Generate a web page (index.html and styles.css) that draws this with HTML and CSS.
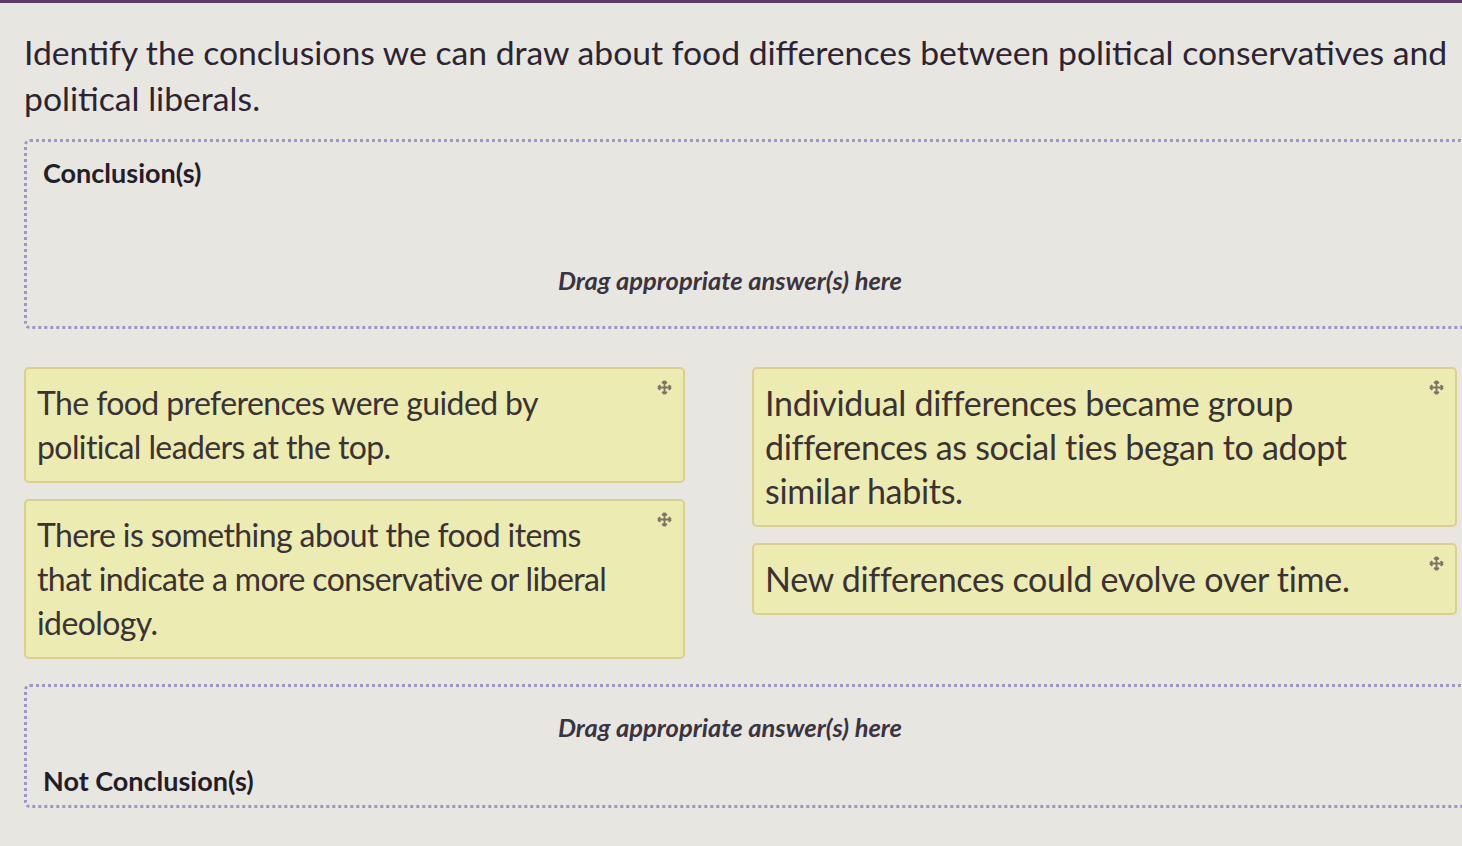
FILE: index.html
```html
<!DOCTYPE html>
<html lang="en">
<head>
    <meta charset="UTF-8">
    <meta name="viewport" content="width=device-width, initial-scale=1.0">
    <title>Conclusions - Drag and Drop</title>
    <link rel="stylesheet" href="styles.css">
</head>
<body>
    <div class="topbar"></div>

    <div class="page">
        <h1 class="question">Identify the conclusions we can draw about food differences between political conservatives and political liberals.</h1>

        <div class="dropzone">
            <div class="zone-label">Conclusion(s)</div>
            <div class="zone-hint">Drag appropriate answer(s) here</div>
        </div>

        <div class="answers">
            <div class="answer-col">
                <div class="card">
                    <p>The food preferences were guided by political leaders at the top.</p>
                    <svg class="move" viewBox="0 0 16 16"><path d="M8 1v14M1 8h14M8 1l-2.5 2.5M8 1l2.5 2.5M8 15l-2.5-2.5M8 15l2.5-2.5M1 8l2.5-2.5M1 8l2.5 2.5M15 8l-2.5-2.5M15 8l-2.5 2.5"/></svg>
                </div>
                <div class="card">
                    <p>There is something about the food items that indicate a more conservative or liberal ideology.</p>
                    <svg class="move" viewBox="0 0 16 16"><path d="M8 1v14M1 8h14M8 1l-2.5 2.5M8 1l2.5 2.5M8 15l-2.5-2.5M8 15l2.5-2.5M1 8l2.5-2.5M1 8l2.5 2.5M15 8l-2.5-2.5M15 8l-2.5 2.5"/></svg>
                </div>
            </div>
            <div class="answer-col answer-col-right">
                <div class="card">
                    <p>Individual differences became group differences as social ties began to adopt similar habits.</p>
                    <svg class="move" viewBox="0 0 16 16"><path d="M8 1v14M1 8h14M8 1l-2.5 2.5M8 1l2.5 2.5M8 15l-2.5-2.5M8 15l2.5-2.5M1 8l2.5-2.5M1 8l2.5 2.5M15 8l-2.5-2.5M15 8l-2.5 2.5"/></svg>
                </div>
                <div class="card">
                    <p>New differences could evolve over time.</p>
                    <svg class="move" viewBox="0 0 16 16"><path d="M8 1v14M1 8h14M8 1l-2.5 2.5M8 1l2.5 2.5M8 15l-2.5-2.5M8 15l2.5-2.5M1 8l2.5-2.5M1 8l2.5 2.5M15 8l-2.5-2.5M15 8l-2.5 2.5"/></svg>
                </div>
            </div>
        </div>

        <div class="dropzone dropzone-bottom">
            <div class="zone-hint">Drag appropriate answer(s) here</div>
            <div class="zone-label">Not Conclusion(s)</div>
        </div>
    </div>
</body>
</html>
```

FILE: styles.css
```css
* {
    margin: 0;
    padding: 0;
    box-sizing: border-box;
}

body {
    font-family: Lato, "Open Sans", sans-serif;
    background: #e8e6e1;
    color: #2a2430;
    overflow: hidden;
}

.topbar {
    height: 3px;
    background: #5b3d6b;
}

.page {
    padding: 26px 0 0 24px;
    width: 1466px;
}

.question {
    font-size: 33.7px;
    font-weight: 400;
    line-height: 46px;
    color: #2c2433;
    margin-bottom: 18px;
}

.dropzone {
    border: 3px dotted #9d97c9;
    border-radius: 6px;
    height: 190px;
    padding: 14px 16px;
    display: flex;
    flex-direction: column;
}

.zone-label {
    font-size: 27px;
    font-weight: 700;
    color: #231d28;
}

.zone-hint {
    font-size: 25.5px;
    font-weight: 700;
    font-style: italic;
    color: #3a3440;
    text-align: center;
    margin-top: 76px;
    padding-right: 30px;
}

.dropzone-bottom {
    height: 124px;
    margin-top: 25px;
    padding: 25px 16px 8px;
    justify-content: space-between;
}

.dropzone-bottom .zone-hint {
    margin-top: 0;
}

.answers {
    display: grid;
    grid-template-columns: 661px 705px;
    column-gap: 67px;
    margin-top: 38px;
    align-items: start;
}

.answer-col {
    display: flex;
    flex-direction: column;
    gap: 16px;
}

.card {
    position: relative;
    background: #ecebb2;
    border: 2px solid #dcd08d;
    border-radius: 5px;
    padding: 12px 50px 12px 11px;
}

.card p {
    font-size: 32px;
    letter-spacing: -0.6px;
    line-height: 44px;
    color: #3a3234;
}

.answer-col-right .card p {
    font-size: 34px;
    letter-spacing: -0.3px;
}

.move {
    position: absolute;
    top: 11px;
    right: 11px;
    width: 15px;
    height: 15px;
    fill: none;
    stroke: #7d7464;
    stroke-width: 2;
}
```
